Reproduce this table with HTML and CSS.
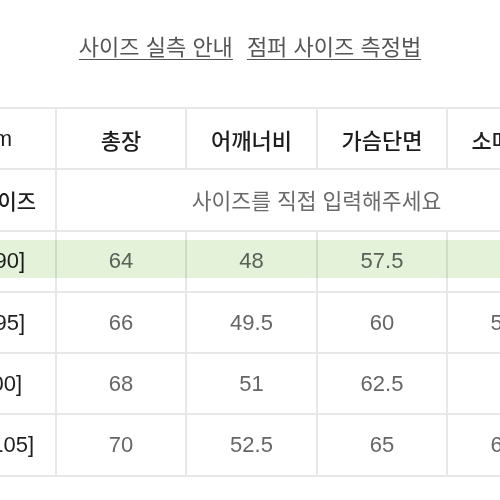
FILE: index.html
```
<!DOCTYPE html>
<html lang="ko">
<head>
<meta charset="utf-8">
<link rel="stylesheet" href="styles.css">
</head>
<body>
<div class="page">
  <nav class="links">
    <a class="link" href="#">사이즈 실측 안내</a>
    <a class="link" href="#">점퍼 사이즈 측정법</a>
  </nav>
  <div class="table-wrap">
    <table class="size-table">
      <colgroup>
        <col class="c-label"><col class="c-val"><col class="c-val2"><col class="c-val"><col class="c-val">
      </colgroup>
      <tr class="head">
        <th class="label">cm</th><th>총장</th><th>어깨너비</th><th>가슴단면</th><th>소매길이</th>
      </tr>
      <tr class="mine">
        <th class="label">내 사이즈</th><td colspan="4" class="input">사이즈를 직접 입력해주세요</td>
      </tr>
      <tr class="row">
        <th class="label">S [90]</th><td>64</td><td>48</td><td>57.5</td><td>58</td>
      </tr>
      <tr class="row">
        <th class="label">M [95]</th><td>66</td><td>49.5</td><td>60</td><td>59.5</td>
      </tr>
      <tr class="row">
        <th class="label label-wide">L [100]</th><td>68</td><td>51</td><td>62.5</td><td>61</td>
      </tr>
      <tr class="row">
        <th class="label label-xwide">XL [105]</th><td>70</td><td>52.5</td><td>65</td><td>62.5</td>
      </tr>
    </table>
    <div class="highlight-band"></div>
  </div>
</div>
</body>
</html>
```
FILE: styles.css
```
html, body {
  margin: 0;
  padding: 0;
  background: #ffffff;
}
body {
  width: 500px;
  height: 500px;
  overflow: hidden;
  font-family: "Noto Sans CJK KR", "Noto Sans", sans-serif;
}
.page {
  width: 500px;
}
.links {
  display: flex;
  justify-content: center;
  gap: 14px;
  padding-top: 32px;
  height: 76px;
  box-sizing: border-box;
}
.link {
  font-size: 22px;
  line-height: 26px;
  color: #555555;
  text-decoration: underline;
  text-decoration-thickness: 1px;
  text-underline-offset: 4px;
}
.table-wrap {
  position: relative;
  margin-top: 31px;
  margin-left: -49px;
  width: 640px;
}
.size-table {
  border-collapse: collapse;
  table-layout: fixed;
  width: 627px;
}
.c-label { width: 104px; }
.c-val { width: 130px; }
.c-val2 { width: 131px; }
.size-table th,
.size-table td {
  border: 2px solid #e8e8e8;
  text-align: center;
  padding: 0;
  white-space: nowrap;
  overflow: hidden;
}
.size-table tr {
  height: 61.3px;
}
.head th {
  font-size: 22px;
  font-weight: 500;
  color: #1e1e1e;
}
.size-table .label {
  text-align: right;
  padding-right: 30px;
  font-family: "Liberation Sans", "Noto Sans CJK KR", sans-serif;
  font-size: 22px;
  font-weight: 400;
  color: #1e1e1e;
}
.size-table .label-wide {
  padding-right: 33px;
}
.size-table .label-xwide {
  padding-right: 27px;
}
.size-table .mine .label {
  font-family: "Noto Sans CJK KR", sans-serif;
  font-size: 21px;
  font-weight: 500;
  padding-right: 23px;
}
.size-table .head .label {
  font-family: "Liberation Sans", sans-serif;
  padding-right: 43px;
}
.input {
  font-size: 21.5px;
  color: #6a6a6a;
  font-weight: 400;
}
.row td {
  font-family: "Liberation Sans", sans-serif;
  font-size: 22px;
  color: #666666;
}
.highlight-band {
  position: absolute;
  left: 0;
  right: 0;
  top: 133px;
  height: 38px;
  background: #e4f2d9;
  mix-blend-mode: multiply;
  pointer-events: none;
}
```
